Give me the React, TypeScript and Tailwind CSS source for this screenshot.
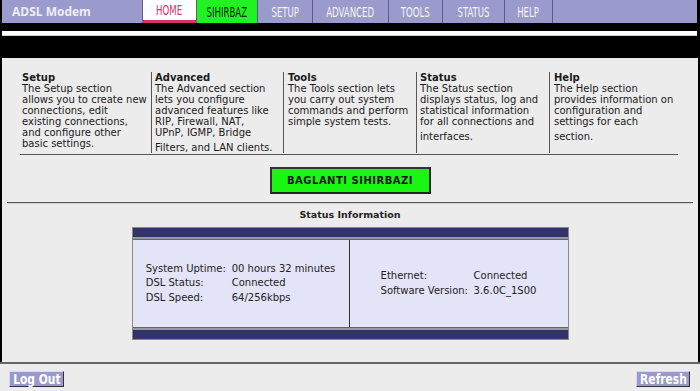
const body = "font-['DejaVu_Sans','Verdana',sans-serif]";

const tabs = [
  { label: 'HOME', cls: 'w-[54px] bg-white text-[#d4336b] border-b-[3px] border-b-[#d4336b]' },
  { label: 'SIHIRBAZ', cls: 'w-[61px] bg-[#21f221] text-[#112211]' },
  { label: 'SETUP', cls: 'w-[55px] text-[#f4f4f4]' },
  { label: 'ADVANCED', cls: 'w-[76px] text-[#f4f4f4]' },
  { label: 'TOOLS', cls: 'w-[54px] text-[#f4f4f4]' },
  { label: 'STATUS', cls: 'w-[62px] text-[#f4f4f4]' },
  { label: 'HELP', cls: 'w-[48px] text-[#f4f4f4]' },
];

const sections = [
  {
    title: 'Setup',
    w: 'w-[131px] pl-[2px]',
    lines: ['The Setup section', 'allows you to create new', 'connections, edit', 'existing connections,', 'and configure other', 'basic settings.'],
    last: '',
  },
  {
    title: 'Advanced',
    w: 'w-[132px] pl-[3px] border-l border-[#555]',
    lines: ['The Advanced section', 'lets you configure', 'advanced features like', 'RIP, Firewall, NAT,', 'UPnP, IGMP, Bridge'],
    last: 'Filters, and LAN clients.',
  },
  {
    title: 'Tools',
    w: 'w-[133px] pl-[4px] border-l border-[#555]',
    lines: ['The Tools section lets', 'you carry out system', 'commands and perform', 'simple system tests.'],
    last: '',
  },
  {
    title: 'Status',
    w: 'w-[133px] pl-[3px] border-l border-[#555]',
    lines: ['The Status section', 'displays status, log and', 'statistical information', 'for all connections and'],
    last: 'interfaces.',
  },
  {
    title: 'Help',
    w: 'w-[129px] pl-[4px] border-l border-[#555]',
    lines: ['The Help section', 'provides information on', 'configuration and', 'settings for each'],
    last: 'section.',
  },
];

function NavLabel({ text }: { text: string }) {
  return (
    <span className="inline-block scale-x-[0.68] font-['DejaVu_Sans_Condensed','DejaVu_Sans',sans-serif] text-[14px] leading-none whitespace-nowrap">
      {text}
    </span>
  );
}

function PurpleButton({ text }: { text: string }) {
  return (
    <button className="w-full h-[16px] flex items-center justify-center overflow-visible bg-[#9999cc] border border-t-[#d8d8f4] border-l-[#d8d8f4] border-b-[#333] border-r-[#333] text-white">
      <span className="inline-block scale-x-[0.85] font-['DejaVu_Sans_Condensed','DejaVu_Sans',sans-serif] font-bold text-[14px] leading-none whitespace-nowrap">
        {text}
      </span>
    </button>
  );
}

export default function App() {
  return (
    <div className={`w-[700px] h-[391px] overflow-hidden bg-[#ececec] ${body}`}>
      {/* top bar */}
      <div className="bg-black pl-[2px] pr-[3px]">
        <div className="flex h-[23px] bg-[#9a9acc]">
          <div className="w-[140px] pl-[10px] flex items-center font-['Open_Sans',sans-serif] font-bold text-[12px] text-[#eeeef4]">
            ADSL Modem
          </div>
          {tabs.map((t) => (
            <div key={t.label} className={`border-l border-l-[#5c5c88] flex items-center justify-center ${t.cls}`}>
              <NavLabel text={t.label} />
            </div>
          ))}
          <div className="flex-1 border-l border-l-[#5c5c88]" />
        </div>
        <div className="h-[35px] pt-[8px]">
          <div className="h-[5px] bg-white border-b border-[#ccc]" />
        </div>
      </div>

      {/* main panel */}
      <div className="h-[304px] border-x-2 border-black pt-[14px] text-[10px] leading-[11px] text-[#1a1a1a]">
        <div className="ml-[18px] w-[658px]">
          <div className="flex">
            {sections.map((s) => (
              <div key={s.title} className={`${s.w} whitespace-nowrap`}>
                <div className="font-bold">{s.title}</div>
                {s.lines.map((l) => (
                  <div key={l}>{l}</div>
                ))}
                {s.last && <div className="mt-[4px]">{s.last}</div>}
              </div>
            ))}
          </div>
          <div className="mt-[1px] border-t border-[#555]" />
        </div>

        <div className="mt-[12px] flex justify-center">
          <button className="w-[161px] h-[27px] bg-[#19f612] border-2 border-t-[#333] border-l-[#333] border-b-[#222] border-r-[#222] font-bold text-[10px] tracking-[0.5px] text-[#111]">
            BAGLANTI SIHIRBAZI
          </button>
        </div>

        <div className="mt-[8px] mx-[5px] border-t border-b border-t-[#555] border-b-[#d4d4d4]" />

        <div className="mt-[5px] text-center font-bold text-[9.5px] text-[#222]">Status Information</div>

        <div className="mt-[7px] mx-auto w-[437px] border border-[#8a8a8a] bg-[#e4e4f8]">
          <div className="h-[9px] bg-[#33336b]" />
          <div className="h-[3px] bg-[#9a9a9a] border-b border-[#666]" />
          <div className="flex h-[87px] text-[#222] leading-[14.5px]">
            <div className="w-[217px] flex items-center justify-center border-r border-[#333]">
              <div className="grid grid-cols-[86px_auto] whitespace-nowrap">
                <span>System Uptime:</span>
                <span>00 hours 32 minutes</span>
                <span>DSL Status:</span>
                <span>Connected</span>
                <span>DSL Speed:</span>
                <span>64/256kbps</span>
              </div>
            </div>
            <div className="flex-1 flex items-center justify-center">
              <div className="grid grid-cols-[93px_auto] whitespace-nowrap">
                <span>Ethernet:</span>
                <span>Connected</span>
                <span>Software Version:</span>
                <span>3.6.0C_1S00</span>
              </div>
            </div>
          </div>
          <div className="h-[3px] bg-[#9a9a9a] border-t border-[#666]" />
          <div className="h-[9px] bg-[#33336b]" />
        </div>
      </div>

      {/* bottom bar */}
      <div className="border-t-2 border-[#666] flex justify-between pt-[7px] pl-[9px] pr-[10px]">
        <div className="w-[55px]">
          <PurpleButton text="Log Out" />
        </div>
        <div className="w-[54px]">
          <PurpleButton text="Refresh" />
        </div>
      </div>
    </div>
  );
}
